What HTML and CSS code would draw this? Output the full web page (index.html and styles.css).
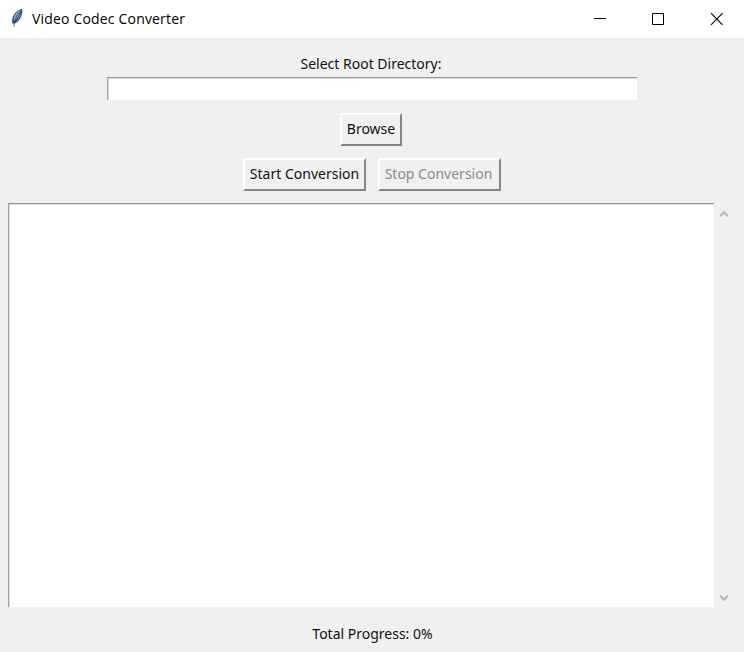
FILE: index.html
```html
<!DOCTYPE html>
<html lang="en">
<head>
<meta charset="utf-8">
<title>Video Codec Converter</title>
<link rel="stylesheet" href="styles.css">
</head>
<body>
<div class="window">
  <header class="titlebar">
    <svg class="feather" width="14" height="20" viewBox="0 0 14 20">
      <path d="M2.4 15.5C1.2 10 4 3 11.9 .7 13.3 4 11.2 12.3 4.7 15.6Z" fill="#35465f"/>
      <path d="M3.9 13.5C3.4 8 6 3.5 10.9 1.5 9.8 6 8 10 3.9 13.5Z" fill="#8fb0d8"/>
      <path d="M11.3 3.2C10 7.5 7.5 11.5 5 14.2 8.6 12.8 11.3 8.5 11.3 3.2Z" fill="#5679a8"/>
      <path d="M10.3 3C7 7 4.8 11 3.8 18.6" fill="none" stroke="#2b3542" stroke-width=".8"/>
    </svg>
    <h1 class="title">Video Codec Converter</h1>
    <div class="controls">
      <svg width="58" height="38" viewBox="0 0 58 38"><path d="M22 18.5h12" stroke="#000" fill="none"/></svg>
      <svg width="58" height="38" viewBox="0 0 58 38"><path d="M22.5 13.5h11v11h-11z" stroke="#000" fill="none"/></svg>
      <svg width="56" height="38" viewBox="0 0 56 38"><path d="M23 13.2l11.6 11.6M34.6 13.2L23 24.8" stroke="#000" stroke-width="1.1" fill="none"/></svg>
    </div>
  </header>
  <main class="content">
    <label class="label" for="root">Select Root Directory:</label>
    <input class="entry" id="root" type="text">
    <button class="button browse">Browse</button>
    <div class="actions">
      <button class="button">Start Conversion</button>
      <button class="button stop" disabled>Stop Conversion</button>
    </div>
    <div class="log">
      <div class="log-text"></div>
      <div class="scrollbar">
        <svg width="10" height="8" viewBox="0 0 10 8"><path d="M1 6.3L5 2.3 9 6.3" fill="none" stroke="#b9b9b9" stroke-width="2.2"/></svg>
        <svg width="10" height="8" viewBox="0 0 10 8"><path d="M1 1.7L5 5.7 9 1.7" fill="none" stroke="#b9b9b9" stroke-width="2.2"/></svg>
      </div>
    </div>
    <p class="label progress">Total Progress: 0%</p>
  </main>
</div>
</body>
</html>
```

FILE: styles.css
```css
* { box-sizing: border-box; }
body {
  margin: 0;
  font-family: "Noto Sans", "Open Sans", sans-serif;
  color: #111;
}
.window {
  width: 744px;
  height: 652px;
  display: flex;
  flex-direction: column;
  background: #f0f0f0;
  overflow: hidden;
}
.titlebar {
  height: 38px;
  display: flex;
  align-items: center;
  padding-left: 10px;
  background: #fff;
}
.feather { margin-top: -2px; }
.title {
  margin: 0 0 0 8px;
  font: 400 14px/38px "Open Sans", "Noto Sans", sans-serif;
  letter-spacing: .18px;
  color: #000;
}
.controls { display: flex; margin-left: auto; }
.content {
  flex: 1;
  display: flex;
  flex-direction: column;
  align-items: center;
  padding-top: 16px;
}
.label {
  margin: 0 2px 0 0;
  font-size: 14px;
  line-height: 20px;
  white-space: nowrap;
}
.entry {
  width: 530px;
  height: 23px;
  margin-top: 3px;
  padding: 0 4px;
  border: 0;
  border-top: 1px solid #999;
  border-left: 1px solid #a0a0a0;
  outline: 0;
  background: #fff;
  box-shadow: inset 1px 1px #dcdcdc;
}
.button {
  width: 123px;
  height: 33px;
  padding: 0 0 1px;
  border: 2px solid;
  border-color: #fff #858585 #858585 #fff;
  background: #f0f0f0;
  font: 14px/20px "Noto Sans", "Open Sans", sans-serif;
  color: #111;
  white-space: nowrap;
}
.button:disabled { color: #8b8b8b; }
.stop { padding-right: 2px; }
.browse { width: 62px; margin: 13px 2px 0 0; }
.actions { display: flex; gap: 12px; margin-top: 12px; }
.log {
  align-self: stretch;
  display: flex;
  height: 404px;
  margin: 12px 0 0 8px;
}
.log-text {
  width: 706px;
  background: #fff;
  border-top: 1px solid #999;
  border-left: 1px solid #a0a0a0;
  box-shadow: inset 1px 1px #dcdcdc;
}
.scrollbar {
  display: flex;
  flex-direction: column;
  justify-content: space-between;
  padding: 7px 5px 5px;
}
.progress { margin: 17px 0 0 1px; }
```
